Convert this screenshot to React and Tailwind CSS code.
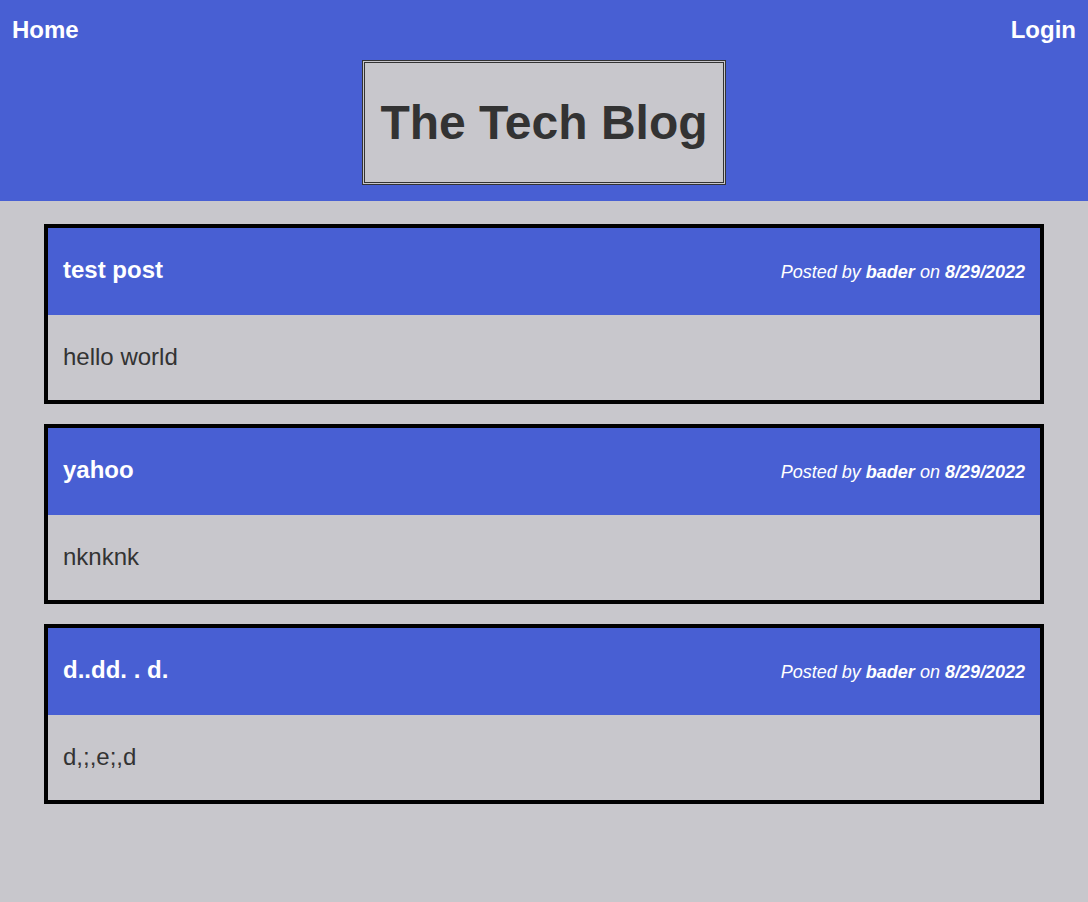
import React from 'react';

const posts = [
  { id: 1, title: 'test post', body: 'hello world', author: 'bader', date: '8/29/2022' },
  { id: 2, title: 'yahoo', body: 'nknknk', author: 'bader', date: '8/29/2022' },
  { id: 3, title: 'd..dd. . d.', body: 'd,;,e;,d', author: 'bader', date: '8/29/2022' },
];

const PostCard = ({ post }) => (
  <div className="border-4 border-black mb-5">
    {/* Post Header */}
    <div className="bg-[#485fd3] h-[87px] pl-[15px] pr-[15px] flex items-center justify-between text-white">
      <h2 className="text-[24px] font-bold leading-none -mt-1">{post.title}</h2>
      <p className="text-[18px] italic leading-none">
        Posted by <span className="font-bold">{post.author}</span> on{' '}
        <span className="font-bold">{post.date}</span>
      </p>
    </div>

    {/* Post Body */}
    <div className="h-[85px] pl-[15px] pr-[15px] flex items-center">
      <p className="text-[24px] leading-none text-[#333] -mt-px">{post.body}</p>
    </div>
  </div>
);

const App = () => {
  return (
    <div
      className="min-h-[902px] bg-[#c8c7cc]"
      style={{ fontFamily: '"Liberation Sans", Arial, sans-serif' }}
    >
      {/* Header */}
      <header className="bg-[#485fd3] h-[201px] flex flex-col">
        <nav className="flex justify-between px-3 pt-4 text-white font-bold text-[24px] leading-[28px]">
          <a href="#">Home</a>
          <a href="#">Login</a>
        </nav>
        <div className="flex justify-center mt-4">
          <h1 className="border-[3px] border-double border-[#333] bg-[#c8c7cc] text-[#333] text-[48px] font-bold leading-[55px] h-[125px] w-[364px] flex items-center justify-center">
            The Tech Blog
          </h1>
        </div>
      </header>

      {/* Posts */}
      <main className="mx-[44px] pt-[23px]">
        {posts.map((post) => (
          <PostCard key={post.id} post={post} />
        ))}
      </main>
    </div>
  );
};

export default App;
